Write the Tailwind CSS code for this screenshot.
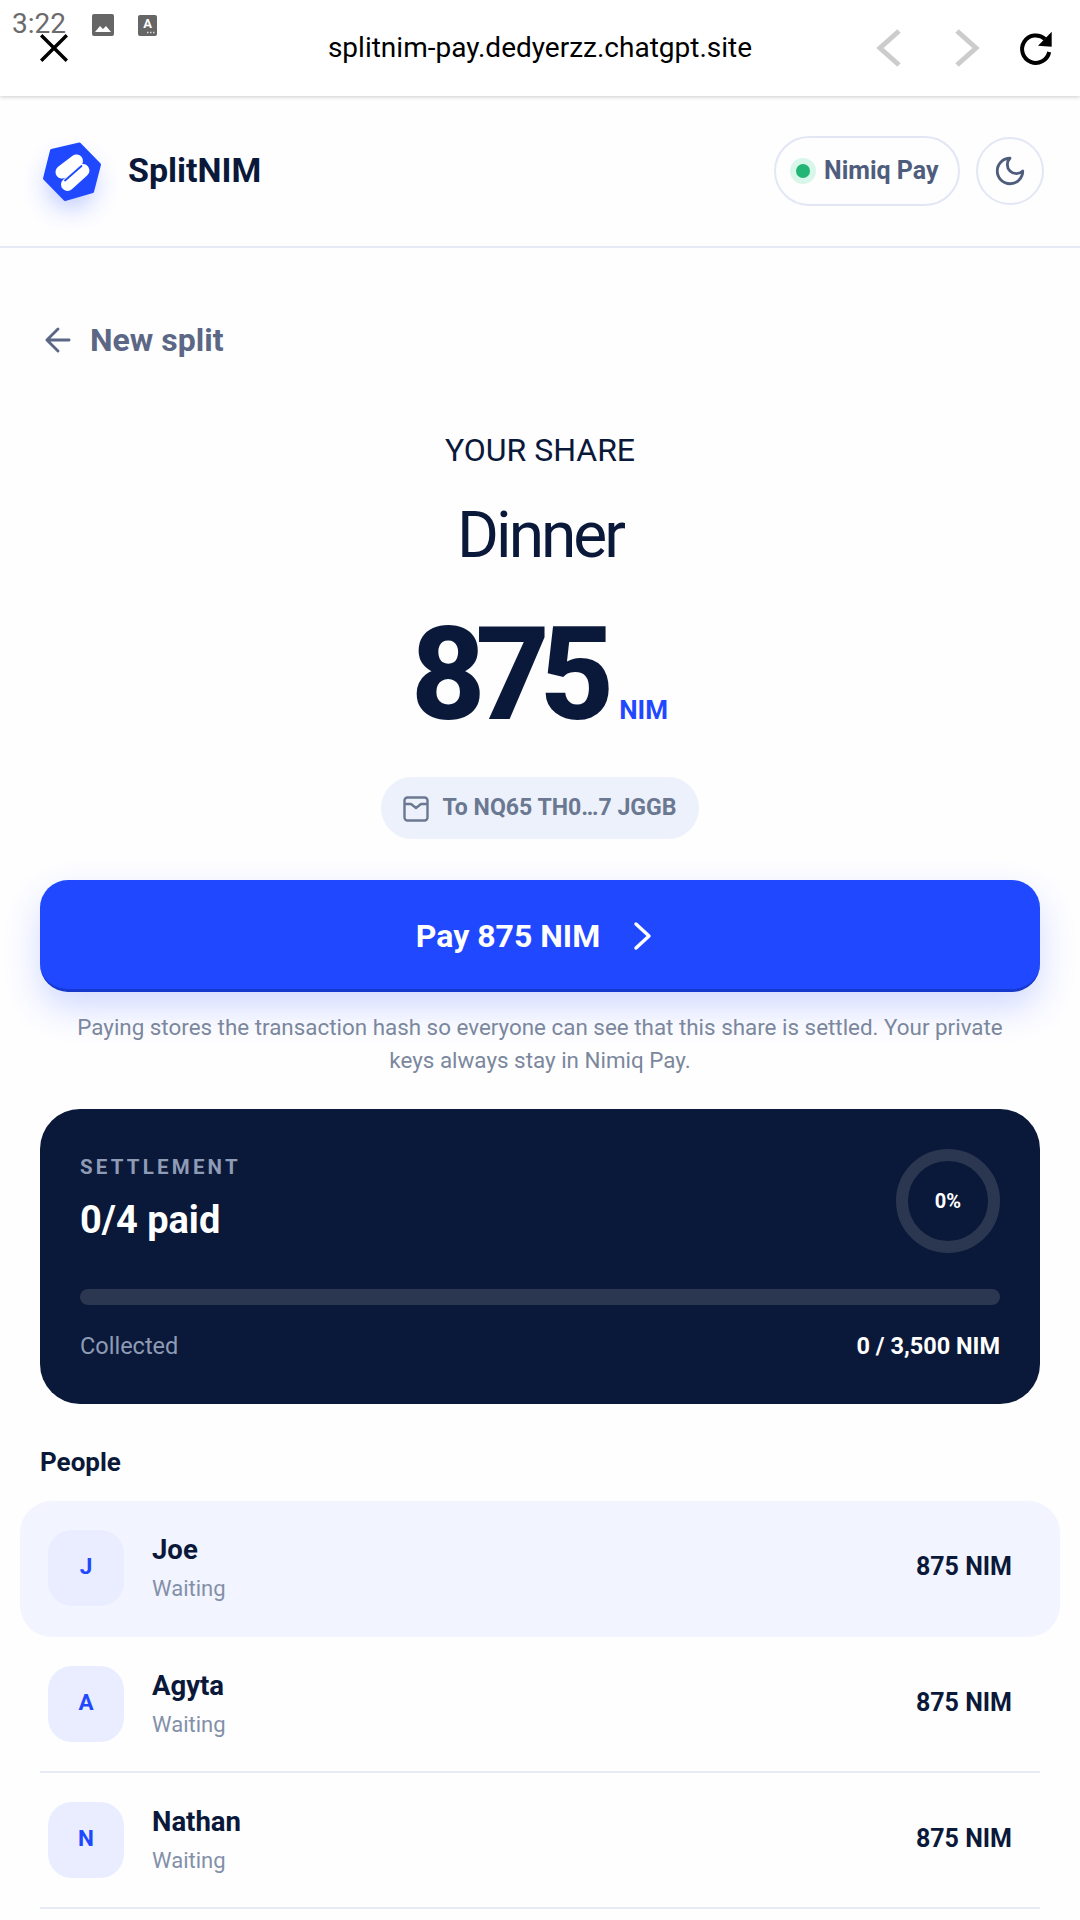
<!DOCTYPE html>
<html lang="en">
<head>
  <meta charset="UTF-8" />
  <meta name="viewport" content="width=device-width, initial-scale=1" />
  <title>SplitNIM</title>
  <script src="https://cdn.jsdelivr.net/npm/@tailwindcss/browser@4"></script>
</head>
<body class="bg-[#fefeff] font-['Roboto',sans-serif] text-[#0a1839] w-[1080px] h-[1920px] overflow-hidden">

  <!-- Status bar icons sit on top of the browser bar -->
  <div class="absolute top-[8px] left-[12px] z-20 flex items-center text-[#6b6b6b]">
    <span class="text-[28px] leading-[32px] w-[66px]">3:22</span>
    <svg class="w-[22px] h-[22px] ml-[14px] mt-[2px]" viewBox="0 0 22 22"><rect width="22" height="22" rx="2" fill="#666"/><path d="M3 18l5-6 3 3 3-3 5 6z" fill="#fff"/></svg>
    <svg class="w-[19px] h-[21px] ml-[24px] mt-[2px]" viewBox="0 0 19 21"><rect width="19" height="21" rx="2" fill="#666"/><text x="9.5" y="13" text-anchor="middle" font-size="13" font-weight="700" fill="#fff" font-family="Roboto">A</text><path d="M9 17.500h1.500M12 17.500h1.500M15 17.500h1.500" stroke="#ddd" stroke-width="1.500"/></svg>
  </div>

  <!-- Browser bar -->
  <div class="h-[96px] bg-white flex items-center relative shadow-[0_1px_4px_rgba(0,0,0,0.2)] z-10">
    <svg class="w-[32px] h-[32px] ml-[38px]" viewBox="0 0 30 30" fill="none" stroke="#000" stroke-width="3.200"><path d="M3 3l24 24M27 3L3 27"/></svg>
    <div class="absolute left-0 right-0 top-[30px] text-center text-[28px] leading-[36px] text-black">splitnim-pay.dedyerzz.chatgpt.site</div>
    <svg class="absolute left-[872px] top-[28px] w-[40px] h-[40px]" viewBox="0 0 40 40" fill="none" stroke="#ccc" stroke-width="5"><path d="M27 3L8 20l19 17"/></svg>
    <svg class="absolute left-[944px] top-[28px] w-[40px] h-[40px]" viewBox="0 0 40 40" fill="none" stroke="#ccc" stroke-width="5"><path d="M13 3l19 17-19 17"/></svg>
    <svg class="absolute left-[1016px] top-[28px] w-[40px] h-[40px]" viewBox="0 0 40 40" fill="none"><path d="M29 11A13.700 13.700 0 1 0 33.200 24" stroke="#000" stroke-width="4"/><path d="M35.700 3.700v15L22 17.700z" fill="#000"/></svg>
  </div>

  <!-- App header -->
  <header class="h-[152px] border-b-2 border-[#e6eaf6] flex items-center pl-[30px] pr-[36px]">
    <div class="w-[80px] h-[80px] relative">
      <div class="absolute left-[18px] top-[18px] w-[46px] h-[46px] rounded-full shadow-[0_12px_26px_rgba(31,72,255,0.32)]"></div>
      <svg class="relative w-[80px] h-[80px]" viewBox="0 0 80 80">
        <path d="M21.500 19.500L49.500 13L69.500 33.500L62.500 60.500L35 68.500L14.500 47.500Z" fill="#1f48ff" stroke="#1f48ff" stroke-width="3" stroke-linejoin="round"/>
        <path d="M32 41L46.500 30M37.500 53.500L53 39.500" stroke="#fff" stroke-width="13" stroke-linecap="round" fill="none"/>
        <path d="M35 49.500L51.500 35" stroke="#1f48ff" stroke-width="1.800" stroke-linecap="round"/>
      </svg>
    </div>
    <div class="ml-[18px] mb-[3px] text-[34px] font-bold leading-none">SplitNIM</div>
    <div class="ml-auto h-[70px] w-[186px] rounded-full border-2 border-[#e3e7f5] flex items-center pl-[14px]">
      <span class="w-[26px] h-[26px] rounded-full bg-[#d9f6ea] flex items-center justify-center"><span class="w-[14px] h-[14px] rounded-full bg-[#22b573]"></span></span>
      <span class="ml-[8px] text-[25px] font-bold text-[#4f5d7c]">Nimiq Pay</span>
    </div>
    <div class="ml-[16px] w-[68px] h-[68px] rounded-full border-2 border-[#e3e7f5] flex items-center justify-center">
      <svg class="w-[34px] h-[34px]" viewBox="0 0 24 24" fill="none" stroke="#4f5d7c" stroke-width="2" stroke-linecap="round" stroke-linejoin="round"><path d="M12 3a6 6 0 0 0 9 9 9 9 0 1 1-9-9Z"/></svg>
    </div>
  </header>

  <main class="px-[40px]">
    <!-- Back link -->
    <div class="mt-[70px] flex items-center h-[44px] ml-[-1px]">
      <svg class="w-[38px] h-[38px]" viewBox="0 0 24 24" fill="none" stroke="#5b6785" stroke-width="1.800" stroke-linecap="round" stroke-linejoin="round"><path d="M19 12H5M12 19l-7-7 7-7"/></svg>
      <span class="ml-[13px] text-[32px] font-bold text-[#5b6785]">New split</span>
    </div>

    <!-- Share summary -->
    <div class="flex flex-col items-center">
      <div class="mt-[68px] text-[32px] leading-[40px]">YOUR SHARE</div>
      <div class="mt-[26px] text-[64px] leading-[80px] tracking-[-3px]">Dinner</div>
      <div class="mt-[24px] flex items-baseline h-[150px] ml-[-1px]">
        <span class="text-[129px] leading-[150px] font-extrabold tracking-[-10px]">875</span>
        <span class="ml-[15px] text-[26px] font-bold text-[#1f48ff]">NIM</span>
      </div>
      <div class="mt-[27px] h-[62px] pt-[1px] rounded-full bg-[#edf1fb] flex items-center px-[22px] text-[#6b7891]">
        <svg class="w-[26px] h-[26px]" viewBox="0 0 26 26" fill="none" stroke="#6b7891" stroke-width="2.400" stroke-linejoin="round"><rect x="1.500" y="1.500" width="23" height="23" rx="3"/><path d="M1.500 8h6.500l5 4 5-4h6.500"/></svg>
        <span class="ml-[13px] text-[23.100px] font-bold">To NQ65 TH0…7 JGGB</span>
      </div>
    </div>

    <!-- Pay button -->
    <button class="mt-[41px] w-full h-[112px] rounded-[28px] bg-[#1f48ff] border-b-[3px] border-[#1638cc] shadow-[0_16px_36px_rgba(31,72,255,0.2)] flex items-center justify-center pr-[10px] pt-[2px] text-white text-[32px] font-bold">
      Pay 875 NIM
      <svg class="ml-[31px] w-[23px] h-[30px]" viewBox="0 0 23 30" fill="none" stroke="#fff" stroke-width="3.400" stroke-linecap="round" stroke-linejoin="round"><path d="M5 3l13 12L5 27"/></svg>
    </button>
    <p class="mt-[19px] text-center text-[22.400px] leading-[33px] text-[#7b879d]">Paying stores the transaction hash so everyone can see that this share is settled. Your private<br />keys always stay in Nimiq Pay.</p>

    <!-- Settlement card -->
    <section class="mt-[32px] h-[295px] rounded-[40px] bg-[#0a1839] px-[40px] pt-[40px] relative">
      <div class="flex justify-between">
        <div class="pt-[6px]">
          <div class="text-[20.500px] leading-[24px] font-bold tracking-[3.200px] text-[#8f9bb5]">SETTLEMENT</div>
          <div class="mt-[19px] text-[38px] leading-[44px] font-bold text-white">0/4 paid</div>
        </div>
        <div class="w-[104px] h-[104px] rounded-full border-[12px] border-[#2b3650] flex items-center justify-center text-white text-[20px] font-bold">0%</div>
      </div>
      <div class="mt-[36px] h-[16px] rounded-full bg-[#2b3650]"></div>
      <div class="mt-[25px] flex justify-between items-center text-[23.500px] leading-[32px]">
        <span class="text-[#8f9bb5]">Collected</span>
        <span class="font-bold text-white">0 / 3,500 NIM</span>
      </div>
    </section>

    <!-- People -->
    <h2 class="mt-[42px] text-[26px] leading-[32px] font-bold">People</h2>
    <div class="mt-[23px]">
      <div class="mx-[-20px] h-[136px] rounded-[32px] bg-[#f2f4ff] border-b-2 border-transparent flex items-center pl-[28px] pr-[48px]">
        <div class="w-[76px] h-[76px] pb-[2px] rounded-[24px] bg-[#eaedff] flex items-center justify-center text-[#1f48ff] text-[22.500px] font-bold">J</div>
        <div class="ml-[28px]"><div class="text-[27.500px] leading-[36px] font-bold">Joe</div><div class="mt-[5px] text-[22px] leading-[32px] text-[#8390a8]">Waiting</div></div>
        <div class="ml-auto mb-[2px] text-[25px] font-bold">875 NIM</div>
      </div>
      <div class="h-[136px] border-b-2 border-[#e6eaf6] flex items-center pl-[8px] pr-[28px]">
        <div class="w-[76px] h-[76px] pb-[2px] rounded-[24px] bg-[#eaedff] flex items-center justify-center text-[#1f48ff] text-[22.500px] font-bold">A</div>
        <div class="ml-[28px]"><div class="text-[27.500px] leading-[36px] font-bold">Agyta</div><div class="mt-[5px] text-[22px] leading-[32px] text-[#8390a8]">Waiting</div></div>
        <div class="ml-auto mb-[2px] text-[25px] font-bold">875 NIM</div>
      </div>
      <div class="h-[136px] border-b-2 border-[#e6eaf6] flex items-center pl-[8px] pr-[28px]">
        <div class="w-[76px] h-[76px] pb-[2px] rounded-[24px] bg-[#eaedff] flex items-center justify-center text-[#1f48ff] text-[22.500px] font-bold">N</div>
        <div class="ml-[28px]"><div class="text-[27.500px] leading-[36px] font-bold">Nathan</div><div class="mt-[5px] text-[22px] leading-[32px] text-[#8390a8]">Waiting</div></div>
        <div class="ml-auto mb-[2px] text-[25px] font-bold">875 NIM</div>
      </div>
    </div>
  </main>
</body>
</html>
